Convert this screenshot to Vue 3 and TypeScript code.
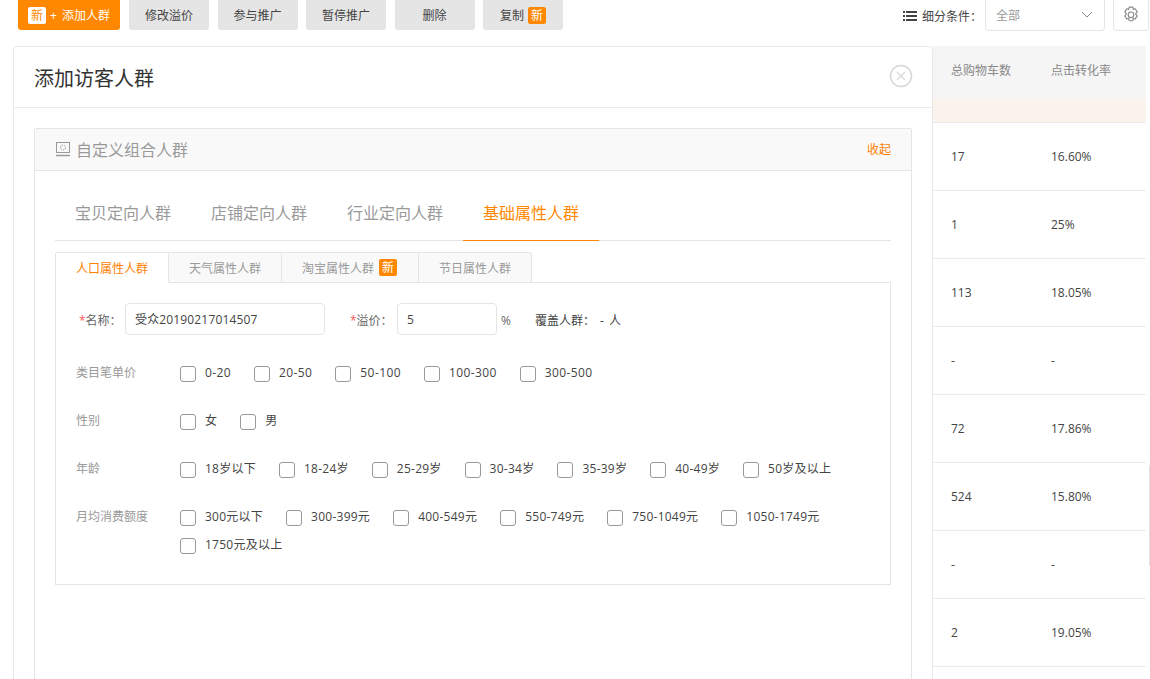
<script setup lang="ts">
interface OptionRow {
  label: string;
  options: string[];
}

const actions = ['修改溢价', '参与推广', '暂停推广', '删除'];
const mainTabs = ['宝贝定向人群', '店铺定向人群', '行业定向人群', '基础属性人群'];
const subTabs = ['人口属性人群', '天气属性人群', '淘宝属性人群', '节日属性人群'];

const optionRows: OptionRow[] = [
  { label: '类目笔单价', options: ['0-20', '20-50', '50-100', '100-300', '300-500'] },
  { label: '性别', options: ['女', '男'] },
  { label: '年龄', options: ['18岁以下', '18-24岁', '25-29岁', '30-34岁', '35-39岁', '40-49岁', '50岁及以上'] },
  {
    label: '月均消费额度',
    options: ['300元以下', '300-399元', '400-549元', '550-749元', '750-1049元', '1050-1749元', '1750元及以上'],
  },
];

const tableRows = [
  ['17', '16.60%'],
  ['1', '25%'],
  ['113', '18.05%'],
  ['-', '-'],
  ['72', '17.86%'],
  ['524', '15.80%'],
  ['-', '-'],
  ['2', '19.05%'],
];
</script>

<template>
  <div class="page">
    <div class="toolbar">
      <button class="btn btn--primary"><span class="new new--white">新</span>+ 添加人群</button>
      <button v-for="action in actions" :key="action" class="btn">{{ action }}</button>
      <button class="btn">复制<span class="new new--copy">新</span></button>
      <div class="filter">
        <svg class="filter__icon" width="14" height="10" viewBox="0 0 14 10">
          <path d="M0 0h2v2H0zM3 0h11v2H3zM0 4h2v2H0zM3 4h11v2H3zM0 8h2v2H0zM3 8h11v2H3z" fill="#444" />
        </svg>
        <span class="filter__label">细分条件：</span>
        <div class="select">
          <span>全部</span>
          <svg width="12" height="7" viewBox="0 0 12 7">
            <path d="M1 1l5 5 5-5" fill="none" stroke="#888" stroke-width="1" />
          </svg>
        </div>
        <div class="gear">
          <svg width="18" height="18" viewBox="0 0 16 16" fill="none" stroke="#888" stroke-width="1">
            <path d="M6.400 1h3.200l.5 2 1.700-.6 1.700 2.800-1.300 1.500.1.300-.1.300 1.300 1.500-1.700 2.800-1.700-.6-.5 2.100H6.400l-.5-2.100-1.700.6-1.700-2.800 1.300-1.500-.1-.3.1-.3-1.300-1.500 1.700-2.800 1.700.6z" stroke-linejoin="round" />
            <circle cx="8" cy="7.800" r="2.500" />
          </svg>
        </div>
      </div>
    </div>

    <div class="content">
      <div class="card">
        <div class="card__head">
          <h2 class="card__title">添加访客人群</h2>
          <svg class="card__close" width="24" height="24" viewBox="0 0 24 24" fill="none" stroke="#d8d8d8">
            <circle cx="12" cy="12" r="10.500" stroke-width="1.500" />
            <path d="M8 8l8 8M16 8l-8 8" stroke-width="1.200" />
          </svg>
        </div>
        <div class="card__body">
          <div class="panel">
            <div class="panel__head">
              <svg width="16" height="16" viewBox="0 0 16 16" fill="none" stroke="#999">
                <rect x="1.500" y="1.500" width="13" height="10" />
                <circle cx="8" cy="6.500" r="2.500" stroke-dasharray="1.500 1" />
                <path d="M1 14.500h14" stroke-width="1.500" />
              </svg>
              <span class="panel__title">自定义组合人群</span>
              <span class="panel__fold">收起</span>
            </div>
            <div class="panel__body">
              <div class="main-tabs">
                <div
                  v-for="(tab, index) in mainTabs"
                  :key="tab"
                  class="main-tab"
                  :class="{ 'main-tab--active': index === 3 }"
                >
                  {{ tab }}
                </div>
              </div>
              <div class="sub-tabs">
                <div
                  v-for="(tab, index) in subTabs"
                  :key="tab"
                  class="sub-tab"
                  :class="{ 'sub-tab--active': index === 0 }"
                >
                  {{ tab }}<span v-if="index === 2" class="new new--tab">新</span>
                </div>
              </div>
              <div class="form">
                <div class="form__top">
                  <label class="field-label"><i>*</i>名称：</label>
                  <div class="input input--name">受众20190217014507</div>
                  <label class="field-label field-label--price"><i>*</i>溢价：</label>
                  <div class="input input--price">5</div>
                  <span class="unit">%</span>
                  <span class="cover">覆盖人群： - 人</span>
                </div>
                <div v-for="row in optionRows" :key="row.label" class="option-row">
                  <div class="option-row__label">{{ row.label }}</div>
                  <div class="option-row__list">
                    <div v-for="option in row.options" :key="option" class="option">
                      <span class="checkbox"></span>{{ option }}
                    </div>
                  </div>
                </div>
              </div>
            </div>
          </div>
        </div>
      </div>

      <div class="table">
        <div class="table__head">
          <span class="table__col">总购物车数</span>
          <span class="table__col">点击转化率</span>
        </div>
        <div class="table__band"></div>
        <div v-for="(row, index) in tableRows" :key="index" class="table__row">
          <span class="table__col">{{ row[0] }}</span>
          <span class="table__col">{{ row[1] }}</span>
        </div>
      </div>
    </div>
    <div class="scroll-thumb"></div>
  </div>
</template>

<style>
html,
body {
  margin: 0;
  background: #fff;
  overflow: hidden;
}
</style>

<style scoped>
.page {
  position: relative;
  width: 1150px;
  height: 679px;
  overflow: hidden;
  color: #444;
  font-size: 12px;
  font-family: 'Open Sans', 'Noto Sans CJK SC', sans-serif;
}

.toolbar {
  display: flex;
  gap: 8.500px;
  height: 30px;
  padding-left: 18px;
  margin-bottom: 16px;
}

.btn {
  display: flex;
  align-items: center;
  justify-content: center;
  width: 80px;
  height: 30px;
  padding: 0;
  border: 0;
  border-radius: 0 0 3px 3px;
  background: #e5e5e5;
  color: #444;
  font: inherit;
}

.btn--primary {
  justify-content: flex-start;
  box-sizing: border-box;
  width: 102px;
  margin-right: 0.500px;
  padding-left: 10px;
  background: #ff8800;
  color: #fff;
  word-spacing: 2px;
}

.new {
  display: inline-block;
  width: 18px;
  height: 17px;
  border-radius: 2px;
  background: #ff8800;
  color: #fff;
  line-height: 17px;
  text-align: center;
}

.new--white {
  margin-right: 4px;
  background: #fff;
  color: #ff8800;
}

.new--copy {
  margin-left: 4px;
}

.new--tab {
  margin: 0 1px 0 5px;
}

.filter {
  display: flex;
  align-items: center;
  height: 31px;
  margin-left: auto;
  padding-right: 1px;
}

.filter__icon {
  margin-right: 5px;
}

.filter__label {
  margin-right: 3px;
  white-space: nowrap;
}

.select {
  display: flex;
  align-items: center;
  justify-content: space-between;
  box-sizing: border-box;
  width: 120px;
  height: 32px;
  margin-top: -1px;
  padding: 0 11px 0 10px;
  border: 1px solid #e5e5e5;
  border-top: 0;
  border-radius: 0 0 4px 4px;
  color: #999;
}

.gear {
  display: flex;
  align-items: center;
  justify-content: center;
  box-sizing: border-box;
  width: 36px;
  height: 32px;
  margin: -1px 0 0 8px;
  border: 1px solid #e5e5e5;
  border-top: 0;
  border-radius: 0 0 4px 4px;
}

.content {
  display: flex;
  padding-left: 13px;
}

.card {
  box-sizing: border-box;
  width: 920px;
  height: 640px;
  border: 1px solid #e8e8e8;
  border-radius: 4px 4px 0 0;
  background: #fff;
}

.card__head {
  display: flex;
  align-items: center;
  justify-content: space-between;
  box-sizing: border-box;
  height: 61px;
  padding: 0 19px 0 20px;
  border-bottom: 1px solid #ebebeb;
}

.card__title {
  margin: 0;
  color: #333;
  font-size: 20px;
  font-weight: 400;
}

.card__close {
  margin-bottom: 2px;
}

.card__body {
  padding: 20px 20px 0;
}

.panel {
  height: 600px;
  border: 1px solid #e5e5e5;
  border-radius: 2px;
}

.panel__head {
  display: flex;
  align-items: center;
  box-sizing: border-box;
  height: 42px;
  padding: 0 20px 2px;
  border-bottom: 1px solid #e5e5e5;
  background: #f9f9f9;
}

.panel__title {
  margin-left: 5px;
  color: #999;
  font-size: 16px;
}

.panel__fold {
  margin-left: auto;
  color: #ff8000;
}

.panel__body {
  padding: 0 20px;
}

.main-tabs {
  display: flex;
  height: 69px;
  border-bottom: 1px solid #e5e5e5;
}

.main-tab {
  box-sizing: border-box;
  width: 136px;
  height: 69px;
  padding: 0 20px;
  color: #999;
  font-size: 16px;
  line-height: 84px;
}

.main-tab--active {
  height: 70px;
  margin-bottom: -1px;
  border-bottom: 1px solid #ff8800;
  color: #ff8800;
}

.sub-tabs {
  display: flex;
  margin-top: 11px;
}

.sub-tab {
  display: flex;
  align-items: center;
  box-sizing: border-box;
  height: 31px;
  padding: 0 20px;
  border: 1px solid #e5e5e5;
  border-left: 0;
  background: #f9f9f9;
  color: #999;
}

.sub-tab:first-child {
  border-left: 1px solid #e5e5e5;
  border-radius: 3px 0 0 0;
}

.sub-tab:last-child {
  border-radius: 0 3px 0 0;
}

.sub-tab--active {
  position: relative;
  border-bottom-color: #fff;
  background: #fff;
  color: #ff8000;
}

.form {
  box-sizing: border-box;
  height: 303px;
  margin-top: -1px;
  padding: 20px 0 0 20px;
  border: 1px solid #e5e5e5;
}

.form__top {
  display: flex;
  align-items: center;
  height: 32px;
  margin-bottom: 24px;
}

.field-label {
  box-sizing: border-box;
  width: 49px;
  margin-top: 2px;
  padding-left: 3px;
  color: #666;
  white-space: nowrap;
}

.field-label i {
  color: #ff5a5a;
  font-style: normal;
}

.field-label--price {
  width: 47px;
  margin-left: 25px;
  padding-left: 0;
}

.input {
  box-sizing: border-box;
  height: 32px;
  padding: 0 9px;
  border: 1px solid #e5e5e5;
  border-radius: 4px;
  letter-spacing: 0.150px;
  line-height: 32px;
}

.input--name {
  width: 200px;
}

.input--price {
  width: 100px;
}

.unit {
  margin: 2px 0 0 4px;
  color: #666;
}

.cover {
  margin: 2px 0 0 24px;
  word-spacing: 2px;
  white-space: nowrap;
}

.option-row {
  display: flex;
  min-height: 28px;
  margin-bottom: 20px;
  line-height: 28px;
}

.option-row__label {
  flex: none;
  width: 104px;
  color: #999;
}

.option-row__list {
  display: flex;
  flex-wrap: wrap;
  flex: 1;
  gap: 0 23px;
}

.option {
  display: flex;
  align-items: center;
  height: 28px;
  color: #444;
  letter-spacing: 0.250px;
  white-space: nowrap;
}

.option-row:nth-child(2) .option {
  letter-spacing: 0.400px;
}

.checkbox {
  flex: none;
  box-sizing: border-box;
  width: 16px;
  height: 16px;
  margin: 2px 9px 0 0;
  border: 1px solid #999;
  border-radius: 3px;
}

.table {
  width: 213px;
}

.table__head {
  display: flex;
  align-items: center;
  box-sizing: border-box;
  height: 53px;
  padding-bottom: 6px;
  background: #f5f5f5;
  color: #888;
}

.table__band {
  box-sizing: border-box;
  height: 24px;
  border-bottom: 1px solid #ebebeb;
  background: #faf3ec;
}

.table__row {
  display: flex;
  align-items: center;
  box-sizing: border-box;
  height: 68px;
  border-bottom: 1px solid #ebebeb;
}

.table__col {
  box-sizing: border-box;
  width: 100px;
  padding-left: 18px;
  white-space: nowrap;
}

.scroll-thumb {
  position: absolute;
  top: 465px;
  right: 0;
  width: 1px;
  height: 101px;
  background: #e0e0e0;
}
</style>
